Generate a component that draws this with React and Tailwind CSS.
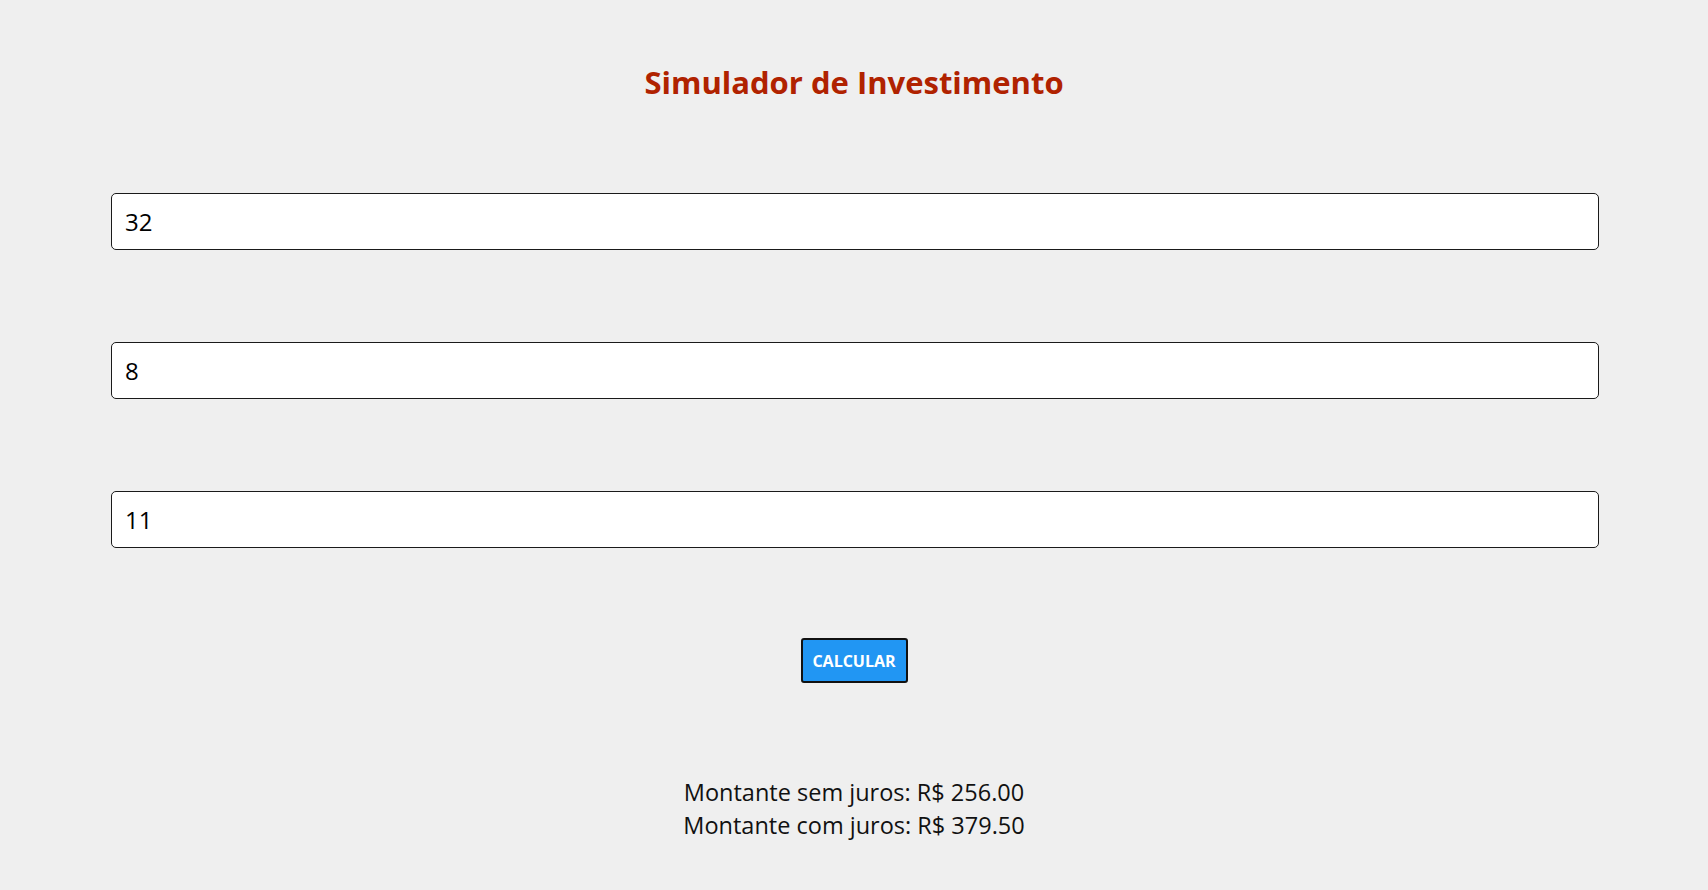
import { useState } from 'react'

function Field({ value, onChange }) {
  return (
    <input
      type="text"
      value={value}
      onChange={e => onChange(e.target.value)}
      className="w-full h-[57px] bg-white border border-[#1a1a1a] rounded-[5px] px-[13px] text-[24px] text-black outline-none"
    />
  )
}

export default function App() {
  const [capital, setCapital] = useState('32')
  const [meses, setMeses] = useState('8')
  const [taxa, setTaxa] = useState('11')
  const [result, setResult] = useState({ sem: 256, com: 379.5 })

  function calcular() {
    const c = parseFloat(capital) || 0
    const m = parseFloat(meses) || 0
    const t = parseFloat(taxa) || 0
    const sem = c * m
    setResult({ sem, com: sem + sem * (t / 100) * 5 })
  }

  return (
    <div className="min-h-[890px] bg-[#efefef] font-['Open_Sans',sans-serif] text-[#111] flex flex-col items-center pt-[63px]">
      <h1 className="text-[31px] leading-[38px] font-bold text-[#b02200]">Simulador de Investimento</h1>

      <div className="w-[1488px] ml-[2px] flex flex-col gap-[92px] mt-[92px]">
        <Field value={capital} onChange={setCapital} />
        <Field value={meses} onChange={setMeses} />
        <Field value={taxa} onChange={setTaxa} />
      </div>

      <button
        onClick={calcular}
        className="mt-[90px] w-[107px] h-[45px] bg-[#2196f3] border-2 border-[#111] rounded-[3px] text-white text-[16px] font-bold"
      >
        CALCULAR
      </button>

      <div className="mt-[93px] text-[23.5px] leading-[33px] text-center">
        <p>Montante sem juros: R$ {result.sem.toFixed(2)}</p>
        <p>Montante com juros: R$ {result.com.toFixed(2)}</p>
      </div>
    </div>
  )
}
